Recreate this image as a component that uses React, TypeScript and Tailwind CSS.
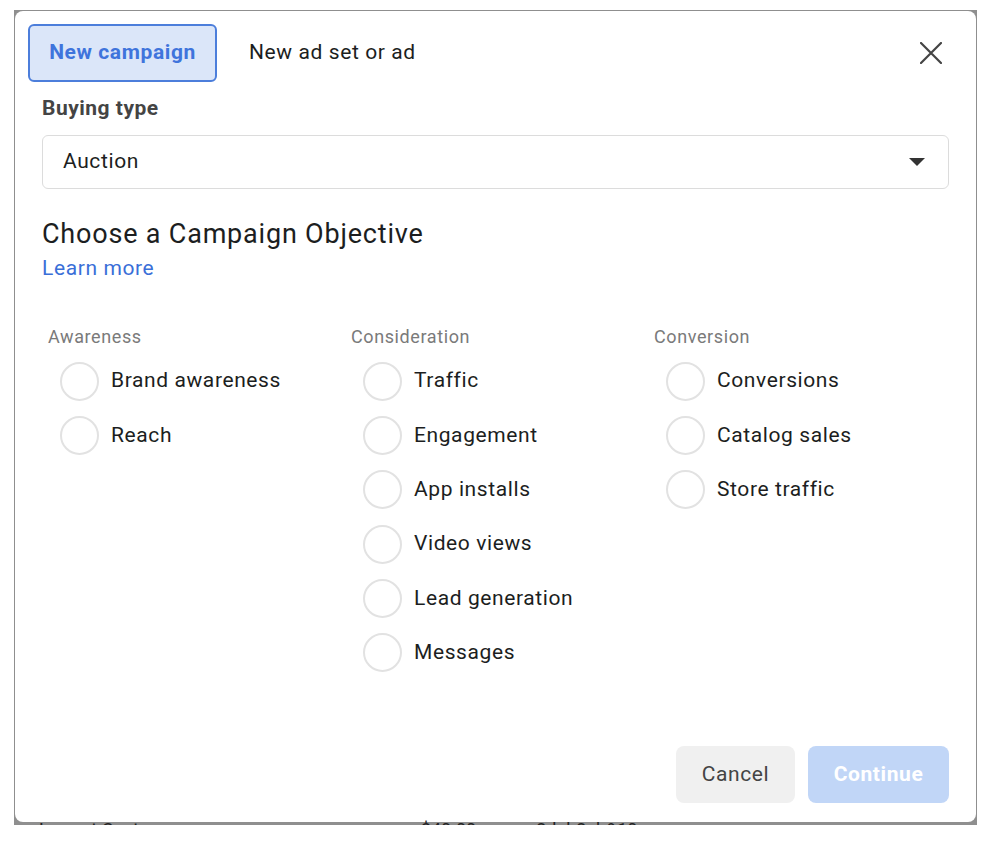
const columns = [
  { title: "Awareness", items: ["Brand awareness", "Reach"] },
  {
    title: "Consideration",
    items: ["Traffic", "Engagement", "App installs", "Video views", "Lead generation", "Messages"],
  },
  { title: "Conversion", items: ["Conversions", "Catalog sales", "Store traffic"] },
];

function Radio({ label }: { label: string }) {
  return (
    <label className="flex h-[40px] items-center gap-[12px] pl-[12px]">
      <span className="h-[39px] w-[39px] shrink-0 rounded-full border-2 border-[#e2e2e2] bg-white" />
      <span className="text-[21px] tracking-[0.6px] text-[#1c1e21]">{label}</span>
    </label>
  );
}

export default function App() {
  return (
    <div className="h-[842px] w-[1002px] bg-white pl-[14px] pt-[10px] font-['Roboto',sans-serif]">
      <div className="flex h-[815px] w-[963px] flex-col overflow-hidden bg-[#8f8f8f] pl-px pr-px pt-px">
        <div className="flex h-[811px] shrink-0 flex-col rounded-[8px] bg-white">
          {/* tabs */}
          <div className="flex items-center pl-[13px] pr-[34px] pt-[13px]">
            <button className="h-[58px] w-[189px] rounded-[6px] border-2 border-[#4c7edb] bg-[#dbe6f9] text-[21px] font-bold tracking-[0.6px] text-[#3f74dc]">
              New campaign
            </button>
            <span className="ml-[32px] text-[21px] tracking-[0.6px] text-[#1c1e21]">New ad set or ad</span>
            <svg className="ml-auto" width="22" height="22" viewBox="0 0 22 22">
              <path d="M1 1L21 21M21 1L1 21" stroke="#444" strokeWidth="2.2" strokeLinecap="round" />
            </svg>
          </div>

          <div className="px-[27px]">
            <div className="mt-[14px] text-[21px] font-bold leading-[24px] tracking-[0.5px] text-[#444]">Buying type</div>
            <div className="mt-[15px] flex h-[54px] items-center justify-between rounded-[6px] border border-[#dcdcdc] pl-[20px] pr-[23px]">
              <span className="text-[21px] tracking-[0.6px] text-[#1c1e21]">Auction</span>
              <svg width="16" height="9" viewBox="0 0 16 9">
                <path d="M0 0h16l-8 8z" fill="#333" />
              </svg>
            </div>

            <h2 className="mt-[29px] text-[27px] leading-[32px] tracking-[0.8px] text-[#1c1e21]">Choose a Campaign Objective</h2>
            <a className="mt-[6px] block text-[21px] leading-[24px] tracking-[0.6px] text-[#3a6fd8]">Learn more</a>

            <div className="mt-[47px] grid grid-cols-[303px_303px_303px] pl-[6px]">
              {columns.map((col) => (
                <div key={col.title}>
                  <div className="text-[18px] leading-[20px] tracking-[0.6px] text-[#7a7a7a]">{col.title}</div>
                  <div className="mt-[14px] flex flex-col gap-[14.4px]">
                    {col.items.map((it) => (
                      <Radio key={it} label={it} />
                    ))}
                  </div>
                </div>
              ))}
            </div>
          </div>

          <div className="mt-auto flex justify-end gap-[13px] pb-[19px] pr-[27px]">
            <button className="h-[57px] w-[119px] rounded-[8px] bg-[#f0f0f0] text-[21px] tracking-[0.6px] text-[#444]">
              Cancel
            </button>
            <button className="h-[57px] w-[141px] rounded-[8px] bg-[#c1d6f7] text-[21px] font-bold tracking-[0.6px] text-white">
              Continue
            </button>
          </div>
        </div>
        <div className="flex h-[12px] shrink-0 items-start gap-[60px] pl-[24px] text-[18px] leading-[18px] text-[#222]">
          <span className="-mt-px">Lowest Cost</span>
          <span className="ml-[222px] -mt-px">$40.00</span>
          <span className="-mt-px">2dab2cb&amp;10</span>
        </div>
      </div>
    </div>
  );
}
